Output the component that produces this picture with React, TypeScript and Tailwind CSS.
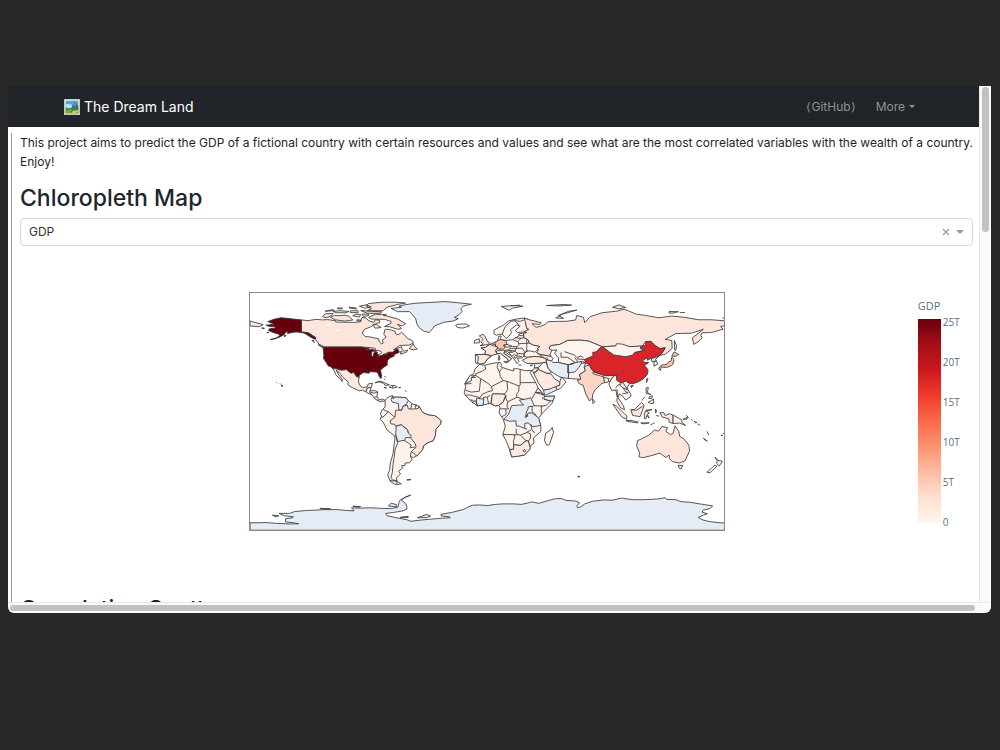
import React from 'react';

const LOW = '#fff3ed';
const SOFT = '#feeae1';
const MID = '#fee5db';
const WARM = '#fdd5c4';
const HIGH = '#fcc4ad';
const NONE = '#e5ecf6';
const CHINA = '#d92529';
const USA = '#67000d';

// Outlines are written as longitude,latitude pairs (equirectangular projection)
const shapes = [
    // Antarctica
    { fill: NONE, d: 'M-180,-90 -180,-84.4 -167,-84.2 -160,-84.8 -150,-85.2 -143,-85.1 -147,-84.3 -153,-83.7 -153,-82.2 -153,-81.2 -148,-80.6 -147,-79.8 -154,-79 -158,-77.2 -150,-77.2 -146,-75.8 -137,-75 -124,-74.4 -114,-74.3 -107,-75 -101,-75.3 -103,-73 -96,-73.2 -88,-73 -80,-73.4 -74,-73.6 -68,-72.7 -67,-69 -66,-67 -62,-64.8 -58,-63.3 -63,-65.4 -65,-67.5 -62,-69.5 -61,-72 -61,-74 -64,-75.3 -71,-76.5 -77,-77.2 -76,-79 -69,-80.5 -61,-82 -58,-83.2 -50,-82.2 -43,-81.6 -36,-81 -28,-80.5 -29,-79.7 -35,-79.2 -35,-77.9 -27,-76.5 -18,-74.2 -15,-72.6 -11,-71 -6,-70.8 0,-71.3 6,-70.4 12,-70 20,-70 26,-70.4 32,-69 34,-68.5 39,-69.6 46,-67.6 51,-66.2 56,-65.9 60,-67.4 67,-67.8 70,-69.2 68,-71.5 68.5,-73 71,-72.2 74,-70 80,-68 88,-67 95,-67.2 102,-65.6 110,-66.8 117,-66.8 124,-66.6 130,-66.2 135,-65.3 136,-66.6 143,-66.8 147,-68.3 154,-68.8 160,-69.8 167,-70.9 171,-71.5 169,-73.5 164,-74.7 163,-76.3 167,-77.5 164,-78.5 160,-80.3 163,-82 168,-83.3 175,-84.2 180,-84.5 180,-90Z M-73,-69.5 -69,-70.5 -69,-72.3 -75,-71.6Z M-53,-80.5 -46,-78 -43,-79.2 -46,-80.4Z M-66,-80.2 -60,-79.4 -60,-80.4Z M-163,-78.5 -158,-79.2 -161,-79.6Z M-102,-71.8 -96,-72 -97,-72.5Z M-127,-73.4 -119,-73.7 -123,-74Z' },
    // Greenland
    { fill: NONE, d: 'M-73,78.3 -68,75.8 -59,75.9 -55,71.5 -54,69.5 -53.5,66.8 -52,64 -48,61 -44,60 -41.5,62.8 -40,65 -33,67.8 -26,68.7 -22,70.5 -25,71.5 -21.5,73.5 -19,76 -20,78 -18,80.1 -12,81.5 -22,82.6 -32,83.5 -44,82.8 -54,82.3 -62,81.2 -67,80 -65,79.2Z' },
    { fill: LOW, d: 'M-24,65.5 -22,66.4 -16,66.5 -13.5,65 -18.5,63.4 -22.7,63.8Z' },
    // Canada
    { fill: MID, d: 'M-141,69.6 -136,69 -130,70 -125,69.6 -121,69.8 -115,69 -115,68 -108,67.8 -101,67.7 -96,68.2 -95,71.5 -92,71 -90,69 -86,67.7 -85,69.6 -82,69.5 -81.5,67.5 -86,66.2 -88,64.5 -93,62.5 -94.5,60.5 -94.5,58.8 -92.5,57 -88,56.5 -82.3,55.2 -82,53 -80,51.3 -79,52 -79.5,54.5 -76.7,56.5 -78.5,58.7 -77.5,62.5 -74,62.3 -70,61 -69.5,59 -67.5,58.3 -65,60.2 -62,57.5 -60.5,55.5 -57,54 -56,52.2 -59,50.5 -66.5,50.2 -71,47 -65,49.2 -64.5,47 -63,45.9 -60.5,46.8 -61,45.3 -65.5,43.5 -66,44.5 -64.5,45.5 -67,45.2 -67.8,47.2 -70,46.5 -71.5,45 -75,45 -79,43.3 -79,42.8 -83,42 -81.7,43.5 -80,44.7 -81,46 -84.5,46.5 -85,48 -88.5,48.5 -95,49 -123,49 -127.5,51 -130.5,55 -130,56 -133,58 -135.5,59.7 -139,60.2 -141,60.3Z' },
    { fill: MID, d: 'M-90,71.5 -85,73.8 -80,73.7 -76,72.5 -68,70.3 -62,66.8 -64.5,65 -68,66.3 -65,63 -68,62.5 -74,64.4 -78,64.5 -73,67 -73,68.5 -78,70 -88,70.2Z M-116,73 -119,71.5 -115,69.6 -108,68.7 -102,69.5 -105,72.5 -108,73.2 -112,72.8Z M-125,72 -123,74.2 -117,74.5 -118,73 -122,71.2Z M-91,76.5 -88,78 -92,80.5 -90,82 -80,83 -70,83 -62,82.4 -68,81.3 -76,79.2 -79,76.5Z M-96,76.7 -90,76.3 -80,75.7 -81,74.6 -91,74.6Z M-117,76 -112,76.6 -105,76 -107,75 -115,75Z M-100,73.8 -96,73.8 -97,71.7 -102,72.7Z M-95,74 -90,74 -90,72.8 -94,72.2Z M-104,76.5 -98,76.6 -98,75 -104,75.2Z M-123,76.2 -117,77.4 -116,76.6Z M-97,80 -92,81 -88,79.5 -93,78.4Z M-105,79.2 -100,78.7 -99,78 -104,78.4Z M-87,65.8 -84,66 -80.5,63.8 -85,63.3Z M-59.3,47.8 -56,51.5 -55.5,49.8 -53,47.5 -55.8,46.9Z M-128.3,50.8 -123.4,48.5 -125.5,48.8Z M-133,54 -131.7,54 -131.3,52.3Z M-99,69.7 -96,69.5 -96,68.7 -99,69Z M-79,73.6 -76.5,73.5 -78,72.8Z M-114,78.5 -110,78.7 -110,78 -113,78Z' },
    // United States
    { fill: USA, d: 'M-124.6,48.4 -123,49 -95.2,49 -92,48.3 -89.5,48 -92,46.7 -88,47.4 -84.8,46.5 -84.7,45.8 -87.5,45.8 -87.9,43 -87.4,41.7 -86.4,42.2 -86.4,44 -85,45.7 -83.4,45.1 -83.5,43.8 -82.5,43.5 -83.3,41.8 -79,42.8 -79,43.3 -76.3,43.6 -75,45 -71.5,45 -70,46.5 -69.2,47.4 -67.8,47.2 -67,44.9 -70.5,43.3 -70.7,42 -74,40.6 -75.5,39 -76,37 -75.8,35.3 -78,34 -81,31.5 -80.1,27 -80.5,25.2 -81.8,26.2 -82.8,28.8 -84,30.1 -89.5,30.2 -89.5,29.2 -94,29.6 -97.2,27.5 -97.2,26 -99.2,26.5 -101.5,29.8 -103,29 -104.6,29.8 -106.5,31.8 -111,31.4 -114.8,32.6 -117.2,32.6 -118.5,34 -120.6,34.6 -122,37 -124.2,40.3 -124,43Z' },
    { fill: USA, d: 'M-141,69.6 -145,70 -152,70.8 -156.5,71.3 -162,70 -166.5,68.3 -163.5,67 -162,66.3 -168,65.6 -165,64.5 -161,64.7 -161,63.5 -165,63 -166,61.6 -162,59.9 -158,58.7 -157.5,57.5 -160,56 -164.8,54.6 -161,55.2 -157,56.8 -154,58.5 -153.5,59.5 -151.8,61 -151.5,59.3 -148,60 -145,60.5 -140,59.8 -137.5,58.8 -134,56.5 -131,55 -130,56 -133,58 -135.5,59.7 -139,60.2 -141,60.3Z M-154,57.8 -152.5,57.8 -154,56.8Z M-171,63.6 -169,63.2 -171,63.2Z M-167,60.2 -165.5,60 -167,59.8Z M-156,20.2 -155,19.5 -155.8,19Z M-157,21 -156.2,20.8 M-158.2,21.5 -157.8,21.3 M-160,22.1 -159.5,22' },
    // Mexico and Central America
    { fill: SOFT, d: 'M-117.2,32.6 -114.8,32.6 -111,31.4 -106.5,31.8 -104.6,29.8 -103,29 -101.5,29.8 -99.2,26.5 -97.2,26 -97.8,22.5 -96,19 -94,18.2 -91,18.8 -90.3,21 -87,21.5 -88,18.4 -91,17.8 -92,15 -94.5,16.2 -97,15.8 -102,18 -105.5,20.2 -105.5,22.5 -109.5,26 -112.5,30 -114.7,31.6 -113,28.5 -110,24.2 -110,22.9 -112,25 -115,28 -115.8,30.3Z' },
    { fill: LOW, d: 'M-92,15 -91,17.8 -88.2,18.4 -88.6,15.9 -84.5,15.8 -83.2,15 -83.7,11.2 -81.8,9 -79.5,9.5 -77.4,8.6 -78.2,7.7 -80.3,8.2 -80.5,7.3 -83,8.3 -85.7,10 -87.6,13 -90,13.7Z M-89,16 -89.3,14.4 -87.5,13 M-89,15 -86,14 -83.2,15 M-85.7,11.1 -83.7,11 M-83,9.6 -83,8.3' },
    { fill: LOW, d: 'M-85,21.9 -82,23.1 -79,22.4 -74.2,20.2 -77.5,19.9 -78.5,21.5 -82,22.5Z M-74.4,18.5 -73,19.9 -70,19.8 -68.4,18.6 -71.5,17.8Z M-71.8,19.7 -71.7,18 M-78.3,18.4 -76.3,18 -77.5,17.8Z M-67.2,18.4 -65.6,18.3 -67,18Z M-78,26.8 -77,26.5 M-78,25 -77.7,24 M-62,16.2 -61.5,15 M-61.8,10.7 -61,10.2' },
    // South America
    { fill: LOW, d: 'M-77.4,8.6 -75.5,10.8 -72,12.2 -71.5,10.8 -68,11 -62,10.6 -60,8.5 -57,6 -51.7,4 -50,1 -48.5,-1 -44,-2.7 -40,-3 -37,-5 -35,-7 -35.5,-9.5 -39,-13.5 -39.3,-18 -41,-22 -45,-23.5 -48.5,-26 -49,-28.7 -53,-33.2 -56,-34.9 -58.3,-34 -57,-36.5 -59,-38.8 -62.3,-39 -62.5,-41 -65,-41 -64,-42.7 -67.3,-45.3 -65.8,-47.2 -69,-50.5 -68.4,-52.3 -71,-53.8 -74,-52 -75.5,-48 -74,-44 -73.5,-39 -71.5,-32 -70,-20 -71,-17.8 -76,-14 -79,-8 -81.2,-6 -80.3,-3.5 -81,-1.5 -80,1 -77.5,3.5Z' },
    { fill: MID, d: 'M-51.7,4 -50,1 -48.5,-1 -44,-2.7 -40,-3 -37,-5 -35,-7 -35.5,-9.5 -39,-13.5 -39.3,-18 -41,-22 -45,-23.5 -48.5,-26 -49,-28.7 -53.4,-33.7 -57.5,-30.2 -54,-27 -54.5,-24.5 -58,-20 -60,-16.2 -60.5,-13.7 -65.3,-10 -69.5,-11 -70.5,-9.5 -73,-9.4 -73.8,-7 -70,-4.2 -69.5,1 -67,1.2 -65,1 -64,4 -60.7,5 -59.8,2 -56,2 -52.5,2.3Z' },
    { fill: NONE, d: 'M-69,-11 -65.3,-10 -60.5,-13.7 -60,-16.2 -57.7,-18 -58,-19.8 -62,-19.7 -62.7,-22 -65,-22 -67.8,-22.8 -69.5,-17.5Z M-73,9.2 -71.7,12 -71.3,9.5 -71,11 -68,11 -62,10.6 -60,8.5 -61,6 -64,4 -65,1 -67,1.2 -67.5,6.2 -72,7.2Z' },
    { fill: 'none', d: 'M-79,1.5 -75.3,0 -78.3,-3.5 -80.3,-4.5 M-75.3,0 -70,-4.2 M-57.3,6 -58,2 M-54,5.7 -54.5,2.3 M-69.5,-17.5 -68,-24 -70,-29 -70.5,-34 -71.5,-40 -72,-46 -73,-50 -71.8,-52 -68.5,-52.3 M-62.7,-22 -57.7,-25.3 -58.5,-27.3 -55,-27 M-57.6,-30.2 -58.3,-34' },
    { fill: LOW, d: 'M-74,-52.5 -69,-52.7 -65.2,-54.8 -69,-55.5 -72,-54Z M-68.6,-52.7 -68.6,-55 M-61,-51.6 -58,-51.6 -60.5,-52Z' },
    // Africa
    { fill: LOW, d: 'M-6,35.8 -2,35.2 5,36.8 10,37.3 11,35 10.2,34 15,32.3 20,30.8 20,32.5 23,32.6 29,31 34.2,31.3 32.5,29.8 35.6,24 37.3,21 38.5,18 43.2,12.4 43.3,11.5 51.2,11.8 49,6 42,-1 39,-5 40.6,-11 40.7,-15 35,-20 35.5,-24 32.6,-26 32.5,-28.5 28,-33 22,-34 18.5,-34.3 17,-29 14.5,-22.5 11.8,-17.5 13.7,-11 12.2,-6 9,-1 9.7,3.5 8.5,4.6 6,4.3 2,6.3 -3,5 -7.5,4.4 -13,8.5 -17,13 -17.5,14.8 -16.3,19 -17,21 -14.8,25 -10,29.5 -9.5,32Z' },
    { fill: NONE, d: 'M12.5,-5.8 16.2,-2 18.5,4.5 24,5 27.5,5 24.3,8.7 30,9.7 33,10.5 35,6 36,4.5 34,4 31,3.7 31,2 29.5,-1 29.3,-4 30.5,-2.5 31,-1 34,-1 39,-5 40.6,-10.5 34.5,-11.5 31,-8.5 28.5,-9 28.5,-12 29.8,-13.3 24,-11 22,-11 21.8,-7 17,-7.3Z M43.3,11.5 51.2,11.8 50,8.5 48,8 43,9.5Z M-7.5,4.4 -3,5 -2.6,9.5 -8,10.2 -8.2,7Z M36.5,14.5 38.5,18 43,12.6 40,14.5Z M-17,21 -12,23.4 -12,26 -8.7,27.5 -13,27.7Z' },
    { fill: 'none', d: 'M-1.8,35 -1.2,32.3 -3.6,30.8 -8.7,28.7 -8.7,27.3 M8.3,36.9 7.5,33.7 9.2,30.2 11.5,33 M9.2,30.2 10,26.5 12,23.5 3.2,19 1.2,21 -5,25 -8.7,27.3 M-12,21.3 -17,21 M-12,25.9 -8.7,25.9 M-5,25 -6,15.5 -12,14.8 -16.5,16.2 M12,23.5 15,23 24,19.5 25,20 25,31.7 M25,22 36.8,22 M15,23 15.5,16.7 13.6,13.7 12,13.3 4,13.5 3.6,11.7 M3.2,19 4,16 0.3,15 -4,13 -5.5,10.5 -11.5,12.2 -13.7,12.7 -16.7,12.4 M24,19.5 24,15.7 22,12.8 22.8,11 15.5,7.5 14,10 14.2,12.5 M8.6,4.8 12,7.2 14.2,12 M2.7,6.3 3.6,11.7 M1,6 0,11 -2.8,11 -2.6,9.5 M0,11 2.2,12.5 M-11.5,6.8 -9,8.5 -7.5,4.4 M-13.3,9 -10.5,8.5 M15.5,7.5 15,4 16.2,2 9.8,2.2 M14,2 14.4,-2 11.3,-3.8 M36.5,14.5 34,10 M22.8,11 28,9 M43,12.6 36.5,14.5 M42,9.5 42,11 M43,9.5 48,8 45,5 41,4 M42,4.2 36,4.5 M41,4 41,-1.5 M34,4 34,0 37.5,-3 M30,-2.5 29,-4.4 30.7,-3.5Z M33,-9.5 34,-14 35.8,-16 34.5,-14.5 M30,-15.6 33.2,-14 M11.8,-17.3 24,-17.6 25.2,-17.8 30.4,-15.8 M22,-13 22,-16.2 23.3,-17.6 M20,-17.8 21,-18.3 20,-22 20,-28.5 17,-28.7 M25.2,-17.8 29.3,-22 31.3,-22.3 32.8,-20 32.8,-16.8 30.4,-15.8 M20,-25 25,-25.7 29.3,-22.2 M31.3,-22.3 32,-26 M27,-29.5 28.5,-28.7 29.3,-29.8 28,-30.6Z M31,-26.3 32,-26 32,-27.2 31,-27Z' },
    { fill: SOFT, d: 'M17,-29 20,-28.5 20,-25 25,-25.7 29.3,-22.2 31.3,-22.3 32,-25.8 32.6,-26.8 32.5,-28.5 28,-33 22,-34 18.5,-34.3Z M27,-29.5 28.5,-28.7 29.3,-29.8 28,-30.6Z M3,6.3 3.6,11.7 4,13.5 12,13.3 14,12.5 12,7.2 8.6,4.8 6,4.3Z' },
    { fill: LOW, d: 'M49.3,-12 50.3,-15.8 47.2,-25 45,-25.5 43.4,-22 44.3,-16.2 48,-14Z' },
    // Europe
    { fill: LOW, d: 'M-9,43.3 -1.8,43.4 -1.2,46 -4.5,48.3 -1.5,48.7 2,51 8,53.7 8.5,57 10.5,57.5 10,54.5 14,54 19,54.5 21.2,56 24,57.3 24,59 30,60 30,46 33,46 36,45.2 38,47 40,46 37.5,44.7 41.5,42 41.5,41.3 36,41.9 31,41.2 28,41.8 28,44 30.5,46 28,45 28,42 26,40.7 23,40.5 24,38 22.5,36.5 19.4,41.3 13.8,45.2 12.5,44.3 18.5,40.2 16.3,38 15.5,40 10,44.2 3,43.2 3,41.8 -0.3,39.5 -2,36.8 -5.5,36 -9,37Z' },
    { fill: MID, d: 'M-1.8,43.4 -1.2,46 -4.5,48.3 -1.5,48.7 2,51 6,49.5 8,49 7.5,47.5 6,46.3 7.5,43.8 3,42.5Z M-5.5,50 -3,51.3 -5,53 -3,54.8 -6,57.5 -3,58.7 -2,57.5 0.3,53 1.7,52.5 1,51Z' },
    { fill: SOFT, d: 'M-9,43.3 -1.8,43.4 3,42.4 -0.3,39.5 -2,36.8 -5.5,36 -7.3,37 -6.7,41.8Z M7,44 7,46 10,46.5 13.5,46.5 12.5,44.3 18.5,40.2 16.3,38 15.5,40 10,44.2Z M8.3,41 9.7,41 9.3,39.1 8.5,39Z M12.5,38 15.5,38.2 15,36.8Z' },
    { fill: HIGH, d: 'M6,51.8 7,53.5 10,54.7 14,54 15,51 12.5,50.2 13.5,48.5 12.5,47.5 7.6,47.6 8,49 6.2,49.7Z' },
    { fill: LOW, d: 'M-10,52 -9.5,54.2 -6,55.2 -6,52.2Z M5,59 5.3,62 12,65.5 16,68.8 22,70.2 28,71 31,70 29,67.5 30,63 31.5,62.5 28,60.5 23,60 21.3,61.5 25,65 22.2,65.8 17.5,62 18.5,60 16.3,57 14.3,55.5 11.2,59 7,58Z M26,35.3 23.6,35.4 M32.5,35 34.5,35.4 33,34.7Z M8.7,42.9 9.4,41.5 8.7,41.7Z' },
    { fill: 'none', d: 'M11.5,59 12.5,62 14,65 18,68.5 21,69 25,68.5 28.5,69.8 M21,69 24,65.8 M15,51 19,49.5 22.6,49.2 24,51 23.6,53 19.7,54.4 M23.6,54 26,55.7 21,56 M26,55.7 28,56 31,54.5 32,52 24,51.5 M28,56 27.5,59.3 M24.3,57.8 27.5,57.5 M32,52 35,50.5 40,49.5 M22.6,49.2 22,48 26.5,48.2 28.2,45.5 M15,51 12.2,50.2 14.8,48.8 18.8,49.5 M17,48 22,48 21,46 16.2,46.7 M13.5,46.5 16.2,46.7 17,48 M10,46.5 9.6,47.5 M13.7,45.4 16.5,46.4 19,45 21,46 22.7,44.2 28,43.8 M19,45 16,45 18.5,42.5 M22.7,44.2 22.5,42.2 26.3,41.8 M20.5,42 21,40.5 23,41.3 M19,42.5 20.5,43.2 22.5,42.2 M3,51.4 6,51 6.2,49.7' },
    // Russia
    { fill: MID, d: 'M28,71 31,70 33,69.4 41,67.5 40,66.2 34,66.7 37,64 40,64.6 44,66.2 46,68.2 54,68.5 60,68.5 67,69.5 68,73 73,71.5 74,67.5 78,72 87,75 98,76.2 104,77.7 113,74 120,73 130,71.2 140,72.5 150,71.5 160,69.7 170,69.7 180,68.9 180,65 177,64.7 179,62.5 170,60 163,59.8 162,57.8 163,56 160,53 156.7,51 155.6,56 161,60 164,62.5 155,59.5 143,59.2 135,54.8 140,54 140.3,48 135,43.5 131,42.7 133,45 135,48.4 131,47.8 127.5,50 124,53.3 120,53 117.5,49.6 108,49.3 98,50.5 97.5,49.8 87.3,49.2 83,51 77,53.5 71,54.2 61,54 55,51 48,50 47,48 49,46.5 47.5,43 48.5,41.8 40,43.4 37.5,44.7 39,47.2 38,47.8 40,49.5 35,50.5 32,52 31,54.5 28,56 27.5,59.3 30,60 28,60.5 31.5,62.5 30,63 29,67.5Z M52,71 57,74 68,77 62,76.2 54,73 58,70.8Z M95,79.2 100,81 105,79 100,78Z M138,76 145,75.8 141,74.8 138,74.7Z M150,75.2 146,75.1 M45,80.5 58,81.3 64,80.8 55,80.2Z M142,54 143.6,50 143,46.3 142,47Z M-180,68.8 -175,67.3 -170,66 -173,64.4 -180,65Z M180,71.3 178.5,71' },
    { fill: SOFT, d: 'M10.5,79.8 20,80.5 27,80 19,78.5 17,76.8Z M18,80.3 25,80.8' },
    // Middle East and Central Asia
    { fill: LOW, d: 'M61,54 71,54.2 77,53.5 83,51 87.3,49.2 82.5,45.3 80.3,42.2 74.5,39.5 74.8,37 71,38.3 71.5,36.7 67,37.2 61.5,35.5 54,37.3 54,40.8 51,44.5 53,46.8 49,46.5 47,48 48,50 55,51Z M40,43.4 48.5,41.8 50,40.2 48.8,38.4 46,39 44,40 43,41.2 41.5,41.5Z M61.5,35.5 67,37.2 71.5,36.7 74.8,37 73.5,34 74.5,31 70,28 71,24.5 67,24.8 61.5,25.2 61.8,29.5Z' },
    { fill: NONE, d: 'M44.5,39.5 48.8,38.4 50,37.3 54,37.3 61.5,35.5 61.8,29.5 61.5,25.2 57.5,25.7 54.5,26.5 51,28.8 48.5,30.2 46,33Z M61.2,35.6 64.5,36 67,37.3 71,38 71.5,36.5 69.5,33.5 66.4,30 61,29.5Z M36,36.8 42.3,37.2 41,34.4 38.8,33.3 35.8,33Z M42.7,16.5 47,17 49,18.5 52,19 53,16.6 45,12.8 43.4,12.7Z' },
    { fill: SOFT, d: 'M35,29.5 36.2,29.2 39,32 44.7,29.3 48.4,28.5 51.5,24.5 55.2,22.7 55,20 52,19 47,17 42.7,16.4 39,21.5Z M26.5,39 30,36.5 36,36.5 44.5,37.3 44.7,40 41.5,41.3 36,41.9 31,41.2Z' },
    { fill: LOW, d: 'M55.2,22.7 56.3,26.3 59.8,22.5 55.5,17.5 53,16.6 52,19 55,20Z M39,32 38.8,33.3 42.3,37.2 44.8,37.2 46,33 48.5,30 47.8,29 44.7,29.3Z M34.3,31.3 35.8,33 38.8,33.3 37,30.5 35,29.5Z' },
    { fill: 'none', d: 'M56,45 56,41.3 61,41.2 66.5,37.4 M58.5,45.5 66,43 68,41 71,42.2 73,40.8 M66.5,41 68.5,38 67.8,37.2 M68,40 74,39.5 M46,39 45,41.2' },
    // South and East Asia
    { fill: WARM, d: 'M68.2,23.7 71,24.5 70,28 74.5,31 73.5,34 77.5,35.5 79,32.5 81,30.2 88,27.3 92,27.5 97,28 95,26 93.2,22.2 91.5,24 88.5,26 89,22 86.8,21.2 82,16.7 80,13 79.8,10.3 77.5,8 74.5,14 72.8,20 70,21Z' },
    { fill: LOW, d: 'M80.3,30.2 88,27.9 88,26.5 80.2,28.8Z M88.3,26 89,22 91.8,22.5 92.3,25Z M79.8,9.7 81.8,7.5 80.2,6Z' },
    { fill: LOW, d: 'M92.2,21 94.5,16 97.5,16.5 98.7,11 98.3,8 101,3 104.2,1.4 103.3,4.5 100.3,9 99.3,10.5 100,13.4 102.5,12 105,8.8 109,11.5 109,13 106,18 108,21.5 105,23.3 102,22.5 99,24 97.5,28 94.7,25.5Z M97.5,18 99,20 101,21 103,18 105,15 107,14.5 M98.5,17 98.7,11 M102.5,13.5 107,14.3 M104,20.5 101.5,21' },
    { fill: CHINA, d: 'M73.7,39.5 80.3,42.2 80,45 82.5,45.3 85.5,48.3 87.5,49.2 91,46.5 96,43 105,41.7 110,42.7 112,45 119.5,46.7 116,47.8 117,49.7 120,50.2 120,53 124,53.3 127.5,50 131,47.8 135,48.4 133,45 131,42.7 126.5,41.5 121.5,39 121.5,40.8 118,39 119,37.4 122.5,37.3 119.3,35 122,31.8 121.7,28.5 118,24.5 114,22.3 110.5,21.2 108,21.5 105,23.3 101.8,21.3 98,24 98.5,27.5 92,27.5 88,27.9 81,30.2 79,32.5 77.5,35.5 74.8,37Z M108.8,19.5 110.8,20 109.5,18.3Z' },
    { fill: LOW, d: 'M87.8,49.2 97.5,49.8 98,51.5 102,51.3 108,49.3 113,49.5 116.7,49.8 116,47.8 119.5,46.7 112,45 110,42.7 105,41.7 96,43 91,46.5Z' },
    { fill: NONE, d: 'M124.5,40 130.5,42.3 127.5,39.5 128.3,38.5 125,37.8Z M100.5,20 102,22.5 104.5,20 106.5,16.5 103,18Z' },
    { fill: SOFT, d: 'M126.5,37.8 128.3,38.5 129.4,36 126.5,34.5Z M121,25 122,25 120.8,22Z' },
    { fill: HIGH, d: 'M130.8,34 133,35.5 136,35.7 137.3,37.5 139.5,38.5 140,41.3 141.8,39.5 140.8,36 139.8,35 136,33.5 132,33.8 131.5,31.3 130,32.5Z M140,42 141.7,45.4 145.3,43.3 143,42Z' },
    // South-east Asia islands
    { fill: SOFT, d: 'M95.3,5.6 98,4.2 104,-1.5 106,-3.2 105.7,-5.8 102,-4Z M105.2,-6.8 109,-6.7 114.5,-7.8 114,-8.6 106.5,-7.4Z M109,1.5 112,1.7 115,5 117,7 119,5 117.8,1 116,-3.8 110.3,-2.9Z M119.5,-5.5 119,-2.8 120.2,1 125,1.5 120.5,0.5 123,-1 121.5,-2 122.8,-5 121,-2.8 120.4,-5.4Z M127.5,2 128.5,0.5 127.8,-1Z M131,-0.8 134,-0.8 135,-3 138,-1.6 141,-2.6 141,-9 138,-8 137.8,-5.5 132.7,-4Z M128,-3 130.5,-3.4 M116.5,-8.6 123,-8.5 119,-9.3Z M124,-10 127,-8.5 M109,1.5 113,1 117.8,4' },
    { fill: LOW, d: 'M141,-2.6 145.8,-5.3 147.8,-6.5 147.5,-8 150.5,-10.5 146,-8.7 141,-9Z M148.5,-5.8 152,-4.3 151.5,-5.8Z M150.8,-2.8 152.8,-4.5 M154.7,-5.6 156,-6.8 M157,-7.4 159,-8.2 158,-8.6Z M159.5,-9.3 161.5,-10.3 M120.5,18 122.2,18.4 121.5,14.5 124,13 120.5,14Z M122,7 126.2,9.5 126.2,6.3 124,6.2Z M122.5,10 123.2,11.5 125.3,12 125,10Z M117.2,8.4 119.5,11.2 M164,-20.2 167,-22.3 165.5,-21.8Z M166.8,-15 168,-17.8 M177.4,-17.8 178.6,-18.2 177.6,-18.2Z M178.8,-16.8 180,-16.2' },
    // Oceania
    { fill: MID, d: 'M114,-22 113.4,-26 115.7,-31.7 115,-34.2 118,-35 124,-33.5 131,-31.5 135.5,-34.8 138,-33 138.2,-35.5 140.5,-38 146,-39 150,-37.3 153.5,-30 153,-25.5 149,-20.5 146,-18.8 145.3,-15 142.5,-10.8 141,-16.5 139,-17.5 135.5,-15 136.8,-12.2 132.5,-11.3 130,-14.8 127,-14 122.3,-18 117,-20.7Z M144.7,-40.7 148.3,-40.9 147,-43.6 145.8,-43Z' },
    { fill: LOW, d: 'M172.7,-34.5 175,-37 178.4,-37.7 176,-41.3 174,-39.3 174.5,-37.5Z M172.7,-40.6 174.2,-41.6 171,-44.5 169,-46.5 166.6,-46 170,-43Z M68.7,-49 70.4,-49.2 69,-49.7Z' },
];

const ticks = ['25T', '20T', '15T', '10T', '5T', '0'];

const PictureIcon = () => (
    <svg width="16" height="16" viewBox="0 0 16 16" fill="none" xmlns="http://www.w3.org/2000/svg" aria-hidden="true">
        <rect width="16" height="16" rx="0.5" fill="#c9c8ba" />
        <rect x="1" y="1" width="14" height="14" fill="#f4f3e8" />
        <rect x="1.7" y="1.7" width="12.6" height="12.6" fill="#4aa9dc" />
        <path d="M1.7 5.5C4 4 5.5 6 8 5.5V9H1.7Z" fill="#b4e2f2" />
        <path d="M6.5 10L9 6L10.5 4L12 4.3L14.3 7V11H6.5Z" fill="#466b85" />
        <path d="M9.5 6.3L10.8 4.3L11.8 5.4L11 7.5Z" fill="#7f9bab" />
        <path d="M1.7 8.3L4 9.3L8 9.5L14.3 10V14.3H1.7Z" fill="#3f8b3b" />
        <path d="M1.7 12L6 10.5L9 11L6 12.2L7 14.3H1.7Z" fill="#78b544" />
        <path d="M7 14.3L9 11.8L14.3 11.3V13L11 14.3Z" fill="#cfc65c" />
    </svg>
);

const Caret = ({ className }: { className?: string }) => (
    <svg viewBox="0 0 8 4" className={className} aria-hidden="true">
        <path d="M0 0H8L4 4Z" fill="currentColor" />
    </svg>
);

const Navbar = () => (
    <nav className="flex h-[41px] items-center justify-between bg-[#212529] pl-14 pr-16">
        <a href="#home" className="flex items-center gap-1 text-sm text-white">
            <PictureIcon />
            The Dream Land
        </a>
        <div className="flex items-center gap-5 text-xs text-[#909294]">
            <a href="#github">⟨GitHub⟩</a>
            <button type="button" className="flex items-center gap-1">
                More
                <Caret className="w-1.5" />
            </button>
        </div>
    </nav>
);

const VariableSelect = () => (
    <div className="flex h-7 items-center rounded-sm border border-[#d9d9d9] px-2 text-xs text-[#333]">
        <select aria-label="Variable" className="min-w-0 flex-1 appearance-none bg-transparent outline-none">
            <option>GDP</option>
        </select>
        <button type="button" aria-label="Clear value" className="mr-1.5 text-[#999]">
            <svg width="8" height="8" viewBox="0 0 8 8" stroke="currentColor" strokeWidth="1.2">
                <path d="M1 1L7 7M7 1L1 7" />
            </svg>
        </button>
        <Caret className="w-2 text-[#999]" />
    </div>
);

const WorldMap = () => (
    <svg viewBox="-180 -90 360 180" className="w-full border border-[#888] bg-white" role="img" aria-label="World map of GDP">
        <g transform="scale(1 -1)" stroke="#3c3c3c" strokeWidth="0.65" strokeLinejoin="round">
            {shapes.map((shape, index) => (
                <path key={index} d={shape.d} fill={shape.fill} />
            ))}
        </g>
        {/* Lakes */}
        <g fill="#fff">
            <path d="M-123 -66L-118 -67L-120 -65Z M-116 -62L-109 -63L-114 -61Z M-99 -53L-97 -51L-96 -51Z M104 -52L109 -55L107 -52Z" />
        </g>
    </svg>
);

const ColorBar = () => (
    <div className="pl-0.5 pt-1.5 font-['Open_Sans',sans-serif] text-[#2a3f5f]/80">
        <div className="mb-0.5 text-[11px] leading-4">GDP</div>
        <div className="flex gap-0.5">
            <div className="mt-[3px] h-[204px] w-[23px] bg-[linear-gradient(to_top,#fff5f0,#fee0d2_12.5%,#fcbba1_25%,#fc9272_37.5%,#fb6a4a_50%,#ef3b2c_62.5%,#cb181d_75%,#a50f15_87.5%,#67000d)]" />
            <div className="flex h-[212px] flex-col justify-between text-[10px] leading-3">
                {ticks.map((tick) => (
                    <span key={tick}>{tick}</span>
                ))}
            </div>
        </div>
    </div>
);

export default function App() {
    return (
        <div className="min-h-screen bg-[#282828] pl-2 pr-[9px] pt-[86px] font-[Inter,'Liberation_Sans',sans-serif] text-[#212529]">
            <div className="overflow-hidden rounded-b-md bg-[#fafafa]">
                <div className="flex">
                    <div className="min-w-0 flex-1 bg-white">
                        <Navbar />
                        <main className="ml-[3px] mt-1.5 border-l border-[#999] pl-2 pr-1.5">
                            <p className="-mr-1 text-xs leading-[19px]">
                                This project aims to predict the GDP of a fictional country with certain resources and values and see what are the most correlated variables with the wealth of a country. Enjoy!
                            </p>
                            <h2 className="mb-1.5 mt-[13px] text-[23px] leading-7 font-medium">Chloropleth Map</h2>
                            <VariableSelect />
                            <div className="mt-[46px] grid grid-cols-[24%_50%_20%_auto]">
                                <div className="col-start-2">
                                    <WorldMap />
                                </div>
                                <div className="col-start-4">
                                    <ColorBar />
                                </div>
                            </div>
                            <div className="mt-16 h-[7px] overflow-hidden">
                                <h2 className="text-[23px] leading-7 font-medium">Correlation Scatter</h2>
                            </div>
                        </main>
                    </div>
                    <div className="w-3 border-l border-[#e8e8e8] px-0.5">
                        <div className="mt-px h-[145px] rounded-full bg-[#c1c1c1]" />
                    </div>
                </div>
                <div className="border-t border-[#e8e8e8] pb-0.5 pl-0.5 pr-4 pt-0.5">
                    <div className="h-[6px] rounded-full bg-[#c1c1c1]" />
                </div>
            </div>
        </div>
    );
}
